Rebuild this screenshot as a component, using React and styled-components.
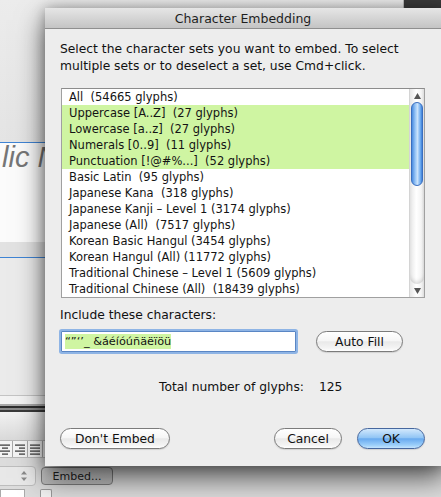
import styled, { createGlobalStyle } from "styled-components";

const Global = createGlobalStyle`
    html, body {
        margin: 0;
        padding: 0;
        background: #e8e8e8;
        overflow: hidden;
    }
    * { box-sizing: border-box; }
`

const FONT = `"Lucida Grande", "DejaVu Sans", sans-serif`

const sets = [
    { label: "All  (54665 glyphs)" },
    { label: "Uppercase [A..Z]  (27 glyphs)", on: true },
    { label: "Lowercase [a..z]  (27 glyphs)", on: true },
    { label: "Numerals [0..9]  (11 glyphs)", on: true },
    { label: "Punctuation [!@#%...]  (52 glyphs)", on: true },
    { label: "Basic Latin  (95 glyphs)" },
    { label: "Japanese Kana  (318 glyphs)" },
    { label: "Japanese Kanji \u2013 Level 1 (3174 glyphs)" },
    { label: "Japanese (All)  (7517 glyphs)" },
    { label: "Korean Basic Hangul (3454 glyphs)" },
    { label: "Korean Hangul (All) (11772 glyphs)" },
    { label: "Traditional Chinese \u2013 Level 1 (5609 glyphs)" },
    { label: "Traditional Chinese (All)  (18439 glyphs)" },
]

export default function App () {
    return (
        <Desktop>
            <Global />
            <BackWindow>
                <TopBand>
                    <DarkCorner />
                </TopBand>
                <BlueLine />
                <Canvas>
                    <ItalicText>lic N</ItalicText>
                </Canvas>
                <GrayBand />
                <BlueLine />
                <Panel />
                <Rule $c="#c4c4c4" />
                <Rule $c="#f3f3f3" $h={8} />
                <Rule $c="#a8a8a8" $h={2} />
                <Rule $c="#2e2e2e" $h={2} />
                <Rule $c="#8a8a8a" $h={2} />
                <Rule $c="#3a3a3a" $h={2} />
                <ToolArea />
                <AlignRow>
                    <AlignIcon kind="center" />
                    <AlignIcon kind="right" />
                    <AlignIcon kind="justify" />
                </AlignRow>
                <ControlRow>
                    <Stepper>
                        <svg width="8" height="12" viewBox="0 0 8 12">
                            <path d="M4 1 L7 4.5 H1 Z" fill="#8a8a8a" />
                            <path d="M4 11 L7 7.5 H1 Z" fill="#8a8a8a" />
                        </svg>
                    </Stepper>
                    <EmbedButton>Embed...</EmbedButton>
                </ControlRow>
                <BottomRow>
                    <SmallField />
                    <SmallCheck />
                </BottomRow>
            </BackWindow>

            <Sheet>
                <TitleBar>Character Embedding</TitleBar>
                <Body>
                    <Intro>
                        Select the character sets you want to embed. To select
                        <br />
                        multiple sets or to deselect a set, use Cmd+click.
                    </Intro>
                    <ListBox>
                        <Rows>
                            {sets.map(s => (
                                <Row key={s.label} $on={s.on}>{s.label}</Row>
                            ))}
                        </Rows>
                        <Scrollbar>
                            <Arrow>
                                <svg width="7" height="6" viewBox="0 0 7 6"><path d="M3.5 0 L7 6 H0 Z" fill="#555" /></svg>
                            </Arrow>
                            <Thumb />
                            <Track />
                            <Arrow>
                                <svg width="7" height="6" viewBox="0 0 7 6"><path d="M3.5 6 L7 0 H0 Z" fill="#555" /></svg>
                            </Arrow>
                        </Scrollbar>
                    </ListBox>

                    <Label>Include these characters:</Label>
                    <InputRow>
                        <Field>
                            <Selected>{"\u201c\u201d\u2018\u2019_ &áéíóúñäëïöü"}</Selected>
                        </Field>
                        <PushButton $w={87}>Auto Fill</PushButton>
                    </InputRow>

                    <TotalRow>
                        <span>Total number of glyphs:</span>
                        <span>125</span>
                    </TotalRow>

                    <ButtonRow>
                        <PushButton $w={110}>Don't Embed</PushButton>
                        <Spacer />
                        <PushButton $w={68}>Cancel</PushButton>
                        <PushButton $w={68} $primary>OK</PushButton>
                    </ButtonRow>
                </Body>
            </Sheet>
        </Desktop>
    )
}

function AlignIcon ({ kind }) {
    const lines = [0, 3, 6, 9]
    const widths = {
        center: [10, 6, 10, 6],
        right: [10, 6, 10, 6],
        justify: [10, 10, 10, 10],
    }[kind]
    return (
        <AlignCell>
            <svg width="12" height="11" viewBox="0 0 12 11">
                {lines.map((y, i) => {
                    const w = widths[i]
                    const x = kind === "center" ? 1 + (10 - w) / 2 : kind === "right" ? 11 - w : 1
                    return <rect key={y} x={x} y={y + 0.5} width={w} height="1.2" fill="#333" />
                })}
            </svg>
        </AlignCell>
    )
}

const Desktop = styled.div`
    position: relative;
    width: 441px;
    height: 497px;
    overflow: hidden;
    font-family: ${FONT};
`

const BackWindow = styled.div`
    display: flex;
    flex-direction: column;
    height: 100%;

    & > * {
        flex-shrink: 0;
    }
`

const TopBand = styled.div`
    height: 142px;
    display: flex;
    justify-content: flex-end;
    align-items: flex-start;
    background: linear-gradient(to bottom, #ececec, #e4e4e4);
`

const DarkCorner = styled.div`
    width: 38px;
    height: 9px;
    background: #3a3a3a;
    border-left: 1px solid #bdbdbd;
    border-bottom-left-radius: 2px;
`

const BlueLine = styled.div`
    height: 1px;
    background: #3f84d4;
`

const Canvas = styled.div`
    height: 99px;
    background: #fbfbfb;
    padding-left: 2px;
`

const ItalicText = styled.div`
    font-family: "Liberation Sans", "DejaVu Sans", sans-serif;
    font-style: italic;
    font-size: 29px;
    line-height: 28px;
    color: #767676;
    word-spacing: 0px;
`

const GrayBand = styled.div`
    height: 15px;
    background: #e2e2e2;
`

const Panel = styled.div`
    height: 137px;
    background: #ebebeb;
`

const Rule = styled.div`
    height: ${p => p.$h || 1}px;
    background: ${p => p.$c};
`

const ToolArea = styled.div`
    height: 28px;
    background: linear-gradient(to bottom, #f2f2f2, #d9d9d9);
`

const AlignRow = styled.div`
    height: 18px;
    display: flex;
    margin-left: -2px;
    background: #f4f4f4;
    border-top: 1px solid #b8b8b8;
    border-bottom: 1px solid #b8b8b8;
`

const AlignCell = styled.div`
    width: 15px;
    display: flex;
    align-items: center;
    justify-content: center;
    border-right: 1px solid #a8a8a8;
`

const ControlRow = styled.div`
    display: flex;
    align-items: flex-start;
    gap: 5px;
    padding-top: 8px;
    height: 29px;
    background: #dcdcdc;
`

const BottomRow = styled(ControlRow)`
    padding-top: 0;
    height: 12px;
    align-items: flex-end;
`

const Stepper = styled.div`
    width: 40px;
    height: 20px;
    margin-left: -4px;
    display: flex;
    align-items: center;
    justify-content: flex-end;
    padding-right: 7px;
    background: #e8e8e8;
    border: 1px solid #bdbdbd;
    border-radius: 4px;
`

const EmbedButton = styled.div`
    width: 72px;
    height: 18px;
    margin-top: 1px;
    display: flex;
    align-items: center;
    justify-content: center;
    font-size: 11px;
    color: #222;
    background: linear-gradient(to bottom, #d6d6d6, #bdbdbd);
    border: 1px solid #7e7e7e;
    border-radius: 4px;
`

const SmallField = styled.div`
    width: 25px;
    height: 10px;
    background: #fff;
    border: 1px solid #aaa;
    border-bottom: none;
`

const SmallCheck = styled.div`
    width: 12px;
    height: 10px;
    margin-left: 10px;
    background: #f2f2f2;
    border: 1px solid #999;
    border-bottom: none;
    border-radius: 2px 2px 0 0;
`

const Sheet = styled.div`
    position: absolute;
    left: 45px;
    top: 8px;
    width: 400px;
    height: 458px;
    display: flex;
    flex-direction: column;
    background: #ededed;
    box-shadow: 0 12px 26px rgba(0, 0, 0, 0.62), 0 0 12px rgba(0, 0, 0, 0.28);
`

const TitleBar = styled.div`
    height: 21px;
    flex-shrink: 0;
    display: flex;
    align-items: center;
    justify-content: center;
    padding-right: 4px;
    font-size: 12.5px;
    color: #1e1e1e;
    background: linear-gradient(to bottom, #e6e6e6, #c4c4c4);
    border-bottom: 1px solid #8f8f8f;
`

const Body = styled.div`
    display: flex;
    flex-direction: column;
    padding: 12px 20px 0 15px;
    color: #111;
`

const Intro = styled.div`
    font-size: 12.3px;
    line-height: 17px;
    white-space: nowrap;
`

const ListBox = styled.div`
    display: flex;
    margin: 13px 0 0 1px;
    height: 210px;
    background: #fff;
    border: 1px solid #a0a0a0;
    border-top-color: #8c8c8c;
`

const Rows = styled.div`
    flex: 1;
    display: flex;
    flex-direction: column;
`

const Row = styled.div`
    height: 16px;
    line-height: 16px;
    padding-left: 7px;
    font-size: 11.5px;
    color: #141414;
    white-space: pre;
    background: ${p => (p.$on ? "#cff5a2" : "transparent")};
`

const Scrollbar = styled.div`
    width: 15px;
    display: flex;
    flex-direction: column;
    align-items: center;
    border-left: 1px solid #d4d4d4;
    background: linear-gradient(to right, #e6e6e6, #ffffff 45%, #f4f4f4 80%, #dcdcdc);
`

const Arrow = styled.div`
    height: 13px;
    display: flex;
    align-items: center;
    justify-content: center;
    flex-shrink: 0;
`

const Thumb = styled.div`
    width: 12px;
    height: 84px;
    flex-shrink: 0;
    border-radius: 6px;
    border: 1px solid #3a6fc0;
    background: linear-gradient(to right, #4a8ce0, #9cc8f7 35%, #c9e2fb 55%, #6aa8ee 85%, #3e7fd6);
`

const Track = styled.div`
    flex: 1;
    width: 100%;
    border-bottom-left-radius: 7px;
    border-bottom-right-radius: 7px;
    box-shadow: inset 0 -4px 4px -2px rgba(0, 0, 0, 0.15);
`

const Label = styled.div`
    margin-top: 9px;
    font-size: 12.3px;
    line-height: 16px;
`

const InputRow = styled.div`
    display: flex;
    align-items: center;
    gap: 20px;
    margin: 8px 0 0 1px;
`

const Field = styled.div`
    width: 235px;
    height: 21px;
    display: flex;
    align-items: center;
    padding-left: 3px;
    background: #fff;
    border: 1px solid #5a86c4;
    box-shadow: 0 0 0 2px rgba(110, 160, 225, 0.75);
    border-radius: 1px;
`

const Selected = styled.span`
    font-size: 11.3px;
    line-height: 15px;
    background: #cff5a2;
    color: #111;
`

const PushButton = styled.div`
    width: ${p => p.$w}px;
    height: 21px;
    display: flex;
    align-items: center;
    justify-content: center;
    font-size: 12.3px;
    color: #111;
    border-radius: 11px;
    border: 1px solid ${p => (p.$primary ? "#46679e" : "#7b7b7b")};
    background: ${p => p.$primary
        ? "linear-gradient(to bottom, #d2e8fc 0%, #93c6f5 45%, #69aaef 52%, #9ccffa 85%, #c4e4fd 100%)"
        : "linear-gradient(to bottom, #ffffff 0%, #f6f6f6 45%, #e9e9e9 52%, #f4f4f4 85%, #ffffff 100%)"};
    box-shadow: 0 1px 1px rgba(0, 0, 0, 0.12);
`

const TotalRow = styled.div`
    display: flex;
    gap: 15px;
    margin-top: 27px;
    padding-left: 99px;
    font-size: 12.3px;
    line-height: 16px;
`

const ButtonRow = styled.div`
    display: flex;
    align-items: center;
    gap: 15px;
    margin-top: 33px;
`

const Spacer = styled.div`
    flex: 1;
`
